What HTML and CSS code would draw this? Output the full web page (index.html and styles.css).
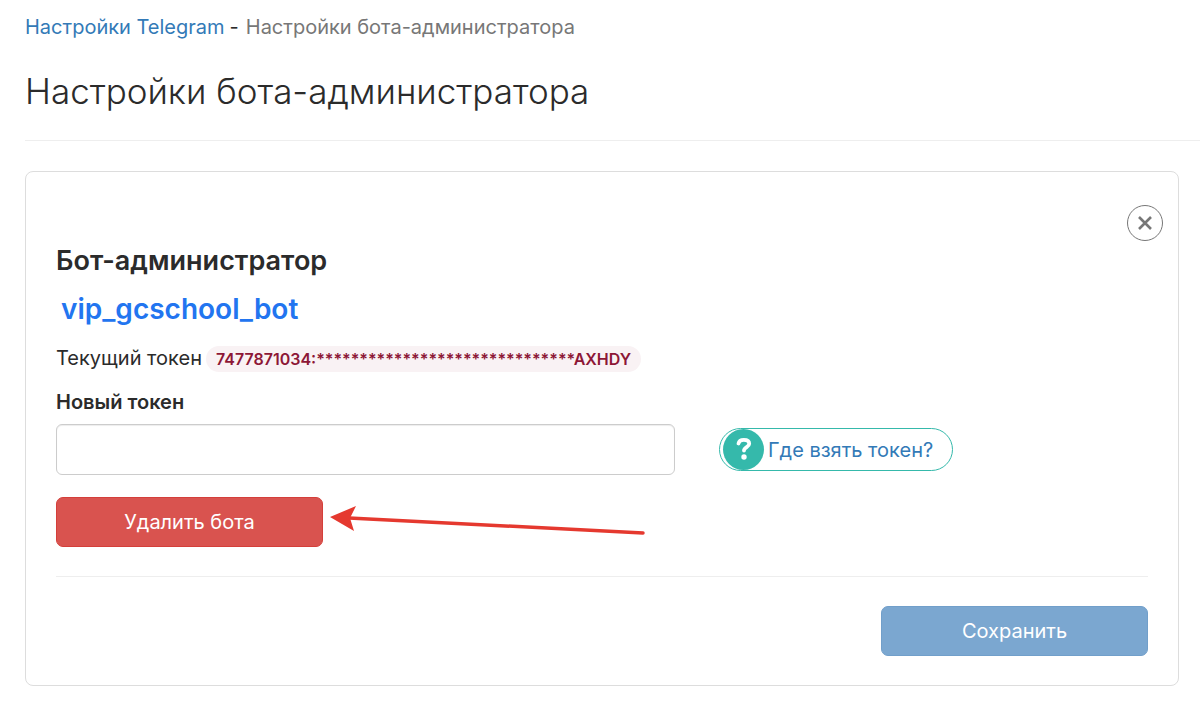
FILE: index.html
```html
<!DOCTYPE html>
<html lang="ru">
<head>
<meta charset="utf-8">
<meta name="viewport" content="width=device-width, initial-scale=1">
<title>Настройки бота-администратора</title>
<link rel="stylesheet" href="styles.css">
</head>
<body>
<header class="page-header">
  <nav class="breadcrumb" aria-label="Навигация"><a href="#">Настройки Telegram</a><span class="separator">-</span><span class="current">Настройки бота-администратора</span></nav>
  <h1 class="page-title">Настройки бота-администратора</h1>
</header>
<main class="card">
  <div class="card-top">
    <button class="close" type="button" aria-label="Закрыть"><svg viewBox="0 0 16 16" width="16" height="16"><path d="M2 2L14 14M14 2L2 14" stroke="#777" stroke-width="2.6" fill="none"/></svg></button>
  </div>
  <form class="form">
    <h2 class="section-title">Бот-администратор</h2>
    <a class="bot-name" href="#">vip_gcschool_bot</a>
    <p class="current-token"><span>Текущий токен</span><code class="token">7477871034:******************************AXHDY</code></p>
    <label class="label" for="token">Новый токен</label>
    <div class="token-row">
      <input class="input" id="token" type="text">
      <a class="help" href="#"><span class="help-icon"><svg viewBox="0 0 41 41" width="41" height="41" aria-hidden="true"><path d="M15.5 14.5C16 11.8 18 10.8 20.8 10.8C24 10.8 26.2 12.2 26.2 14.8C26.2 18.2 21 18 21 21.6" stroke="#fff" stroke-width="3.8" stroke-linecap="round" stroke-linejoin="round" fill="none"/><circle cx="21" cy="28" r="2.7" fill="#fff"/></svg></span><span>Где взять токен?</span></a>
    </div>
    <div class="delete-row">
      <button class="button danger" type="button">Удалить бота</button>
      <svg class="arrow" viewBox="0 0 318 40" width="318" height="40" aria-hidden="true"><path d="M20 16L314 31" stroke="#e5392f" stroke-width="3.5" stroke-linecap="round"/><path d="M1 15L27 4L21 16L25 29Z" fill="#e5392f"/></svg>
    </div>
    <div class="actions"><button class="button primary" type="submit">Сохранить</button></div>
  </form>
</main>
</body>
</html>
```
FILE: styles.css
```css
* { box-sizing: border-box; }
body { margin: 0; padding: 12px 0 30px 25px; background: #fff; color: #2b2b2b; font: 400 20px/30px Inter, "Noto Sans", sans-serif; }
a { color: #337ab7; text-decoration: none; }
.page-header { padding-bottom: 24px; border-bottom: 1px solid #eee; }
.breadcrumb { display: flex; gap: 5px; }
.separator { margin-right: 2px; }
.current { color: #777; }
.page-title { margin: 24px 0 0; font-size: 35px; line-height: 50px; font-weight: 300; }
.card { margin: 30px 21px 0 0; padding: 33px 15px 29px 30px; border: 1px solid #ddd; border-radius: 8px; }
.card-top { display: flex; justify-content: flex-end; }
.close { display: flex; align-items: center; justify-content: center; width: 36px; height: 36px; padding: 0; border: 1px solid #777; border-radius: 50%; background: #fff; }
.form { display: flex; flex-direction: column; align-items: flex-start; padding-right: 15px; }
.section-title { margin: 4px 0 0; font-size: 27px; line-height: 32px; font-weight: 600; }
.bot-name { margin: 16px 0 0 5px; color: #2275f0; font-size: 28px; line-height: 32px; font-weight: 600; }
.current-token { display: flex; align-items: center; gap: 4px; margin: 18px 0 0; line-height: 30px; }
.token { margin-top: 2px; padding: 0 10px; border-radius: 13px; background: #f9f2f4; color: #8d1736; font: 600 16px/26px Inter, sans-serif; }
.label { margin-top: 14px; font-weight: 600; }
.token-row { display: flex; align-items: center; gap: 44px; width: 100%; margin-top: 7px; }
.input { flex: 0 1 619px; min-width: 0; height: 51px; padding: 0 16px; border: 1px solid #ccc; border-radius: 6px; font: inherit; background: #fff; box-shadow: inset 0 1px 1px #00000013; }
.help { display: flex; align-items: center; gap: 4px; height: 43px; padding: 0 19px 0 3px; border: 1px solid #35b9ab; border-radius: 22px; white-space: nowrap; }
.help-icon { display: flex; width: 41px; height: 41px; border-radius: 50%; background: #35b9ab; }
.delete-row { display: flex; align-items: center; gap: 6px; margin-top: 22px; }
.button { width: 267px; height: 50px; padding: 0; border: 1px solid; border-radius: 7px; color: #fff; font: inherit; }
.danger { background: #d9534f; border-color: #d43f3a; }
.primary { background: #7ba7d0; border-color: #719fca; }
.actions { display: flex; justify-content: flex-end; width: 100%; margin-top: 29px; padding-top: 29px; border-top: 1px solid #eee; }
```
